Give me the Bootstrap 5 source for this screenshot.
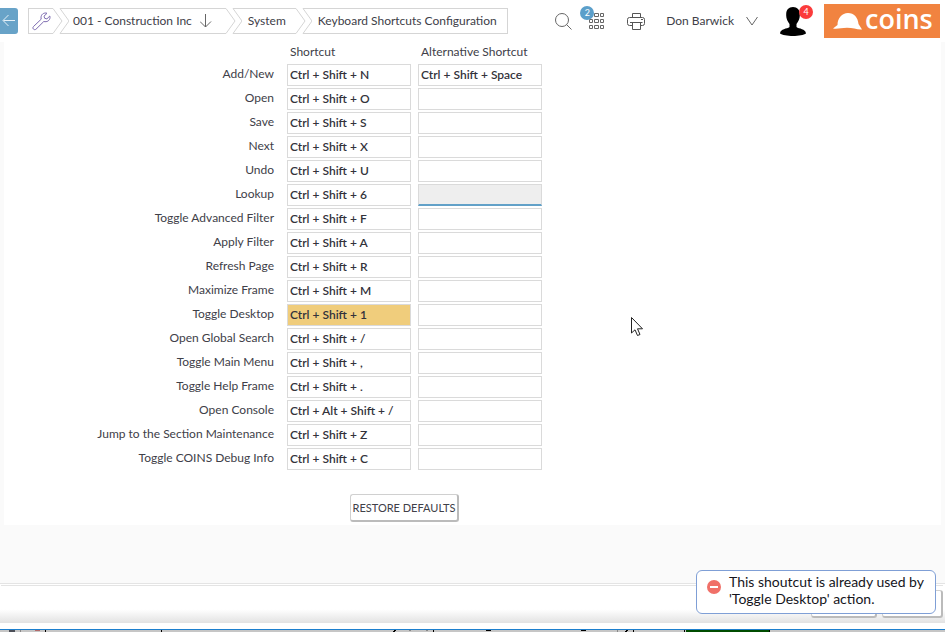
<!DOCTYPE html>
<html lang="en">
<head>
<meta charset="utf-8">
<meta name="viewport" content="width=device-width, initial-scale=1">
<title>Keyboard Shortcuts Configuration</title>
<link href="https://cdn.jsdelivr.net/npm/bootstrap@5.3.0/dist/css/bootstrap.min.css" rel="stylesheet">
<style>
  body { font-family: Lato, "Liberation Sans", sans-serif; font-size: 12px; line-height: 20px; color: #404048; background: #fff; }
  a, a:hover { color: inherit; text-decoration: none; }
  svg { display: block; flex: none; }
  .line-icon { fill: none; stroke: #666; stroke-width: 1; }
  .topbar { height: 42px; padding-right: 5px; }
  .back-btn { width: 18px; height: 26px; background: #68a3c8; border-radius: 0 3px 3px 0; margin-right: 10px; }
  .trail { height: 26px; }
  .trail-step { border: solid #d5d5d5; border-width: 1px 0; }
  .trail-first { border-left-width: 1px; width: 25px; }
  .trail-last { border-right-width: 1px; padding: 0 10px 0 6px; }
  .trail-mid { padding: 0 10px 0 6px; }
  .trail-company { padding: 0 14px 0 4px; }
  .count-badge { position: absolute; width: 14px; height: 14px; border-radius: 7px; font-size: 9px; line-height: 14px; text-align: center; color: #fff; }
  .count-apps { background: #5b9fca; left: -9px; top: -7px; }
  .count-user { background: #fb3b3b; right: -7px; top: -2px; }
  .apps-btn { margin-left: 17px; }
  .print-btn { margin-left: 22px; }
  .user-btn { margin-left: 21px; gap: 12px; }
  .avatar-btn { margin-left: 22px; margin-right: 18px; }
  .brand-box { width: 116px; height: 34px; background: #f18340; padding-left: 9px; gap: 3px; }
  .brand-word { font: 600 27px/30px "Open Sans", "Noto Sans", sans-serif; color: #fff; padding-bottom: 4px; }
  .workspace { background: #fafafa; padding: 0 4px; }
  .panel { background: #fff; padding-bottom: 3px; }
  .head-row { height: 22px; margin-left: 283px; gap: 7px; }
  .head-row span { width: 124px; padding-left: 3px; }
  .key-row { gap: 7px; margin-bottom: 2px; }
  .key-row label { width: 270px; text-align: right; margin-right: 6px; }
  .key-input { width: 124px; height: 22px; border: 1px solid #dadada; padding: 0 2px 2px; font-weight: 600; line-height: 18px; color: #33333b; background: #fff; outline: 0; border-radius: 0; }
  .key-active { background: #eee; border-bottom: 2px solid #62a1c8; }
  .key-clash { background: #f0cd7c; }
  .flat-btn { background: #fff; border: 1px solid #d0d0d0; border-right: 2px solid #bbb; border-bottom: 2px solid #bbb; border-radius: 3px; color: #404048; }
  .restore { width: 109px; height: 28px; font-size: 11px; line-height: 24px; margin: 24px 0 0 346px; }
  .action-bar { height: 40px; border-top: 1px solid #e4e4e4; padding: 1px 2px 0 1px; background: linear-gradient(#fff 65%, #e2e2e2); }
  .action-bar-in { border-top: 1px solid #e4e4e4; padding-top: 4px; gap: 5px; }
  .action-a { width: 66px; height: 28px; }
  .action-b { width: 61px; height: 28px; }
  .taskline { height: 3px; margin-top: 6px; border-top: 1px solid #1c7fce; background: #c6c6c6; overflow: hidden; }
  .notice { position: absolute; right: 9px; bottom: 18px; width: 240px; height: 44px; background: #fff; border: 1px solid #7f9fd6; border-radius: 6px; padding: 2px 9px 3px 10px; gap: 8px; font-size: 14px; line-height: 17px; color: #15151c; }
  .notice svg { margin-top: 7px; }
  .pointer { position: absolute; left: 631px; top: 317px; }
</style>
<script src="https://cdn.jsdelivr.net/npm/bootstrap@5.3.0/dist/js/bootstrap.bundle.min.js"></script>
</head>
<body>
<div class="min-vh-100 d-flex flex-column position-relative">

  <header class="topbar d-flex align-items-center">
    <button type="button" class="back-btn border-0 p-0 d-flex align-items-center" aria-label="Back">
      <svg width="18" height="26" fill="none" stroke="#e4f0f7"><path d="M15 12.500H3.500M8.500 7L3 12.500L8.500 18"/></svg>
    </button>
    <nav aria-label="breadcrumb">
      <ol class="trail list-unstyled d-flex mb-0">
        <li class="trail-step trail-first d-flex align-items-center">
          <a href="#" aria-label="Tools"><svg width="24" height="24" fill="none" stroke="#7d6bb0" stroke-linejoin="round"><path d="M4.500 17.500L12.200 10.200C11.300 6.700 13.500 3.800 17 4L18 4.300L15 7.200L15.700 9.300L17.900 9.900L20.800 7L21 8.500C20.800 11.700 18 13.300 14.800 12.500L7 20.200C5.200 21.700 2.800 19.300 4.500 17.500Z"/></svg></a>
        </li>
        <li aria-hidden="true"><svg width="16" height="26" fill="none" stroke="#d5d5d5"><path d="M0 .5L9 13L0 25.500M16 .5H7L16 13L7 25.500H16"/></svg></li>
        <li class="trail-step trail-company d-flex align-items-center"><a href="#" class="d-flex align-items-center gap-2">001 - Construction Inc
          <svg width="12" height="14" class="line-icon"><path d="M5.500 0V13M0 7.500L5.500 13L11 7.500"/></svg></a></li>
        <li aria-hidden="true"><svg width="16" height="26" fill="none" stroke="#d5d5d5"><path d="M0 .5L9 13L0 25.500M16 .5H7L16 13L7 25.500H16"/></svg></li>
        <li class="trail-step trail-mid d-flex align-items-center"><a href="#">System</a></li>
        <li aria-hidden="true"><svg width="16" height="26" fill="none" stroke="#d5d5d5"><path d="M0 .5L9 13L0 25.500M16 .5H7L16 13L7 25.500H16"/></svg></li>
        <li class="trail-step trail-last d-flex align-items-center" aria-current="page">Keyboard Shortcuts Configuration</li>
      </ol>
    </nav>

    <div class="d-flex align-items-center ms-auto">
      <button type="button" class="btn p-0 border-0" aria-label="Search">
        <svg width="17" height="17" class="line-icon"><circle cx="7" cy="7" r="6.500"/><path d="M11.500 11.500L16.500 16.500"/></svg>
      </button>
      <button type="button" class="apps-btn btn p-0 border-0 position-relative" aria-label="Applications">
        <svg width="16" height="17" class="line-icon"><path d="M.5 .5h3v3h-3zM5.500 .5h4v3h-4zM11.500 .5h3v3h-3zM.5 6.500h3v3h-3zM5.500 6.500h4v3h-4zM11.500 6.500h3v3h-3zM.5 12.500h3v3h-3zM5.500 12.500h4v3h-4zM11.500 12.500h3v3h-3z"/></svg>
        <span class="count-badge count-apps">2</span>
      </button>
      <button type="button" class="print-btn btn p-0 border-0" aria-label="Print">
        <svg width="18" height="17" fill="none" stroke="#555"><path d="M5.500 4.500V.5H13.500V4.500M5 12.500H2.500Q.5 12.500 .5 10.500V6.500Q.5 4.500 2.500 4.500H15.500Q17.500 4.500 17.500 6.500V10.500Q17.500 12.500 15.500 12.500H14M5.500 9.500H13.500V16.500H5.500ZM3 9.500H15.500M14 6.500H16"/></svg>
      </button>
      <a href="#" class="user-btn d-flex align-items-center">Don Barwick
        <svg width="12" height="10" class="line-icon"><path d="M.5 1L6 9L11.500 1"/></svg></a>
      <button type="button" class="avatar-btn btn p-0 border-0 position-relative" aria-label="Profile">
        <svg width="26" height="29"><path d="M13 0C17.500 0 20 3 19.800 8C20 11 18.500 14.500 16.500 17V20C19 22 25.500 21.500 26 26.500C22 29.800 4 29.800 0 26.500C.5 21.500 7 22 9.500 20V17C7.500 14.500 6 11 6.200 8C6 3 8.500 0 13 0Z" fill="#000"/></svg>
        <span class="count-badge count-user">4</span>
      </button>
      <a href="#" class="brand-box d-flex align-items-center">
        <svg width="29" height="17"><path d="M0 15.500L4.500 12C4.500 5 9 0 15 0C21 0 25 4.500 25.500 11L29 16.500C24 16.800 20 14.800 14 14.800C8 14.800 5 16.200 0 15.500Z" fill="#fff"/></svg>
        <span class="brand-word">coins</span>
      </a>
    </div>
  </header>

  <main class="workspace flex-grow-1">
    <form class="panel">
      <div class="head-row d-flex"><span>Shortcut</span><span>Alternative Shortcut</span></div>
      <div class="key-row d-flex"><label for="k1">Add/New</label><input class="key-input" id="k1" value="Ctrl + Shift + N"><input class="key-input" aria-label="Add/New alternative" value="Ctrl + Shift + Space"></div>
      <div class="key-row d-flex"><label for="k2">Open</label><input class="key-input" id="k2" value="Ctrl + Shift + O"><input class="key-input" aria-label="Open alternative"></div>
      <div class="key-row d-flex"><label for="k3">Save</label><input class="key-input" id="k3" value="Ctrl + Shift + S"><input class="key-input" aria-label="Save alternative"></div>
      <div class="key-row d-flex"><label for="k4">Next</label><input class="key-input" id="k4" value="Ctrl + Shift + X"><input class="key-input" aria-label="Next alternative"></div>
      <div class="key-row d-flex"><label for="k5">Undo</label><input class="key-input" id="k5" value="Ctrl + Shift + U"><input class="key-input" aria-label="Undo alternative"></div>
      <div class="key-row d-flex"><label for="k6">Lookup</label><input class="key-input" id="k6" value="Ctrl + Shift + 6"><input class="key-input key-active" aria-label="Lookup alternative"></div>
      <div class="key-row d-flex"><label for="k7">Toggle Advanced Filter</label><input class="key-input" id="k7" value="Ctrl + Shift + F"><input class="key-input" aria-label="Toggle Advanced Filter alternative"></div>
      <div class="key-row d-flex"><label for="k8">Apply Filter</label><input class="key-input" id="k8" value="Ctrl + Shift + A"><input class="key-input" aria-label="Apply Filter alternative"></div>
      <div class="key-row d-flex"><label for="k9">Refresh Page</label><input class="key-input" id="k9" value="Ctrl + Shift + R"><input class="key-input" aria-label="Refresh Page alternative"></div>
      <div class="key-row d-flex"><label for="k10">Maximize Frame</label><input class="key-input" id="k10" value="Ctrl + Shift + M"><input class="key-input" aria-label="Maximize Frame alternative"></div>
      <div class="key-row d-flex"><label for="k11">Toggle Desktop</label><input class="key-input key-clash" id="k11" value="Ctrl + Shift + 1"><input class="key-input" aria-label="Toggle Desktop alternative"></div>
      <div class="key-row d-flex"><label for="k12">Open Global Search</label><input class="key-input" id="k12" value="Ctrl + Shift + /"><input class="key-input" aria-label="Open Global Search alternative"></div>
      <div class="key-row d-flex"><label for="k13">Toggle Main Menu</label><input class="key-input" id="k13" value="Ctrl + Shift + ,"><input class="key-input" aria-label="Toggle Main Menu alternative"></div>
      <div class="key-row d-flex"><label for="k14">Toggle Help Frame</label><input class="key-input" id="k14" value="Ctrl + Shift + ."><input class="key-input" aria-label="Toggle Help Frame alternative"></div>
      <div class="key-row d-flex"><label for="k15">Open Console</label><input class="key-input" id="k15" value="Ctrl + Alt + Shift + /"><input class="key-input" aria-label="Open Console alternative"></div>
      <div class="key-row d-flex"><label for="k16">Jump to the Section Maintenance</label><input class="key-input" id="k16" value="Ctrl + Shift + Z"><input class="key-input" aria-label="Jump to the Section Maintenance alternative"></div>
      <div class="key-row d-flex"><label for="k17">Toggle COINS Debug Info</label><input class="key-input" id="k17" value="Ctrl + Shift + C"><input class="key-input" aria-label="Toggle COINS Debug Info alternative"></div>
      <button type="button" class="flat-btn restore d-block p-0 text-nowrap">RESTORE DEFAULTS</button>
    </form>
  </main>

  <footer>
    <div class="action-bar">
      <div class="action-bar-in d-flex justify-content-end">
        <button type="button" class="flat-btn action-a" aria-label="Save"></button>
        <button type="button" class="flat-btn action-b" aria-label="Close"></button>
      </div>
    </div>
    <div class="taskline" aria-hidden="true">
      <svg width="945" height="2">
        <path d="M45 0h1v2h-1zM161 0h1v2h-1zM394 0h2v1h-2zM393 1h2v1h-2zM433 0h1v2h-1zM486 0h5v1h-5zM581 0h5v1h-5zM626 0h2v1h-2zM625 1h2v1h-2zM633 0h1v2h-1zM684 0h1v2h-1zM769 0h1v2h-1z" fill="#000"/>
        <path d="M9 0h6v2h-6z" fill="#4c4f58"/>
        <path d="M20 0h1v2h-1zM409 0h2v1h-2zM426 0h2v1h-2zM617 0h1v2h-1z" fill="#888"/>
        <path d="M35 0h5v1h-5z" fill="#b46a6a"/>
        <path d="M686 0h83v2h-83z" fill="#004c00"/>
      </svg>
    </div>
  </footer>

  <div class="notice d-flex" role="alert">
    <svg width="14" height="14"><circle cx="7" cy="7" r="7" fill="#f07068"/><path d="M3 6h8v2H3z" fill="#fff"/></svg>
    <span>This shoutcut is already used by 'Toggle Desktop' action.</span>
  </div>
  <svg class="pointer" width="13" height="20" aria-hidden="true"><path d="M.5 .5V16L4 12.800L6.500 18.500L9 17.500L6.500 11.800H11.500Z" fill="#fff" stroke="#222"/></svg>
</div>
</body>
</html>
